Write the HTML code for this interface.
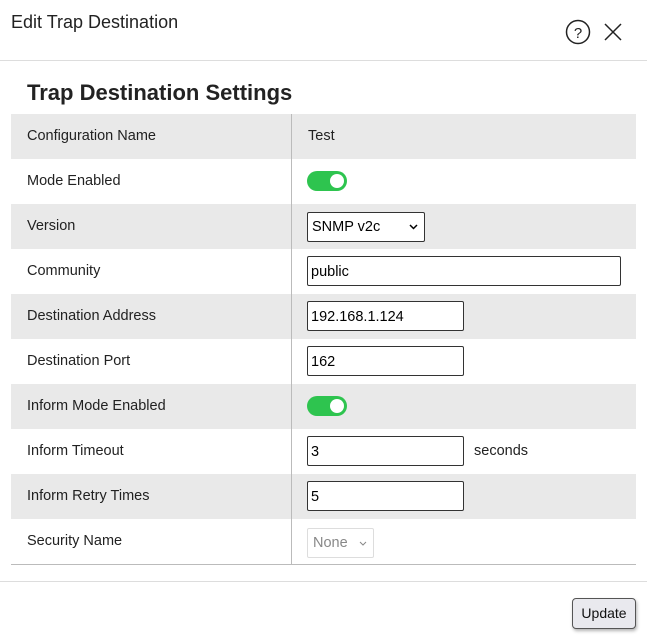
<!DOCTYPE html><html><head><style>
body{margin:0;width:647px;height:641px;background:#fff;font-family:"Liberation Sans",sans-serif;color:#222;position:relative;overflow:hidden}
.a{position:absolute}
.row{position:absolute;left:11px;width:625px;height:45px}
.g{background:#e9e9e9}
.lbl{position:absolute;left:16px;top:14px;font-size:14.5px;color:#222}
.inp{position:absolute;border:1px solid #333;border-radius:2px;background:#fff;box-sizing:border-box;height:30px;font-size:14.5px;padding:6px 3px;color:#000}
.tog{position:absolute;left:296px;top:12px;width:40px;height:20px;border-radius:10px;background:#2ec44f}
.tog:after{content:"";position:absolute;right:3px;top:3px;width:14px;height:14px;border-radius:50%;background:#fff}
</style></head><body>
<div class="a" style="left:11px;top:12px;font-size:18px;color:#222">Edit Trap Destination</div>
<svg class="a" style="left:565px;top:19px" width="28" height="28"><circle cx="13" cy="13" r="11.5" fill="none" stroke="#222" stroke-width="1.5"/><text x="13" y="19" font-size="15" text-anchor="middle" font-family="Liberation Sans" fill="#222">?</text></svg>
<svg class="a" style="left:604px;top:23px" width="18" height="18"><path d="M1 1L17 17M17 1L1 17" stroke="#222" stroke-width="1.5"/></svg>
<div class="a" style="left:0;top:60px;width:647px;height:1px;background:#ddd"></div>
<div class="a" style="left:27px;top:80px;font-size:22px;font-weight:bold;color:#222">Trap Destination Settings</div>
<div class="row g" style="top:114px"><span class="lbl">Configuration Name</span><span class="lbl" style="left:297px">Test</span></div>
<div class="row" style="top:159px"><span class="lbl">Mode Enabled</span><div class="tog"></div></div>
<div class="row g" style="top:204px"><span class="lbl">Version</span><div class="inp" style="left:296px;top:8px;width:118px;padding:6px 4px">SNMP v2c<svg style="position:absolute;right:6px;top:11px" width="9" height="6"><path d="M1 1L4.5 4.5L8 1" stroke="#000" fill="none" stroke-width="1.5"/></svg></div></div>
<div class="row" style="top:249px"><span class="lbl">Community</span><div class="inp" style="left:296px;top:7px;width:314px;padding-top:7px">public</div></div>
<div class="row g" style="top:294px"><span class="lbl">Destination Address</span><div class="inp" style="left:296px;top:7px;width:157px;padding-top:7px">192.168.1.124</div></div>
<div class="row" style="top:339px"><span class="lbl">Destination Port</span><div class="inp" style="left:296px;top:7px;width:157px;padding-top:7px">162</div></div>
<div class="row g" style="top:384px"><span class="lbl">Inform Mode Enabled</span><div class="tog"></div></div>
<div class="row" style="top:429px"><span class="lbl">Inform Timeout</span><div class="inp" style="left:296px;top:7px;width:157px;padding-top:7px">3</div><span class="lbl" style="left:463px;top:14px">seconds</span></div>
<div class="row g" style="top:474px"><span class="lbl">Inform Retry Times</span><div class="inp" style="left:296px;top:7px;width:157px;padding-top:7px">5</div></div>
<div class="row" style="top:519px"><span class="lbl">Security Name</span><div class="inp" style="left:296px;top:9px;width:67px;border-color:#ddd;color:#888;padding:6px 5px">None<svg style="position:absolute;right:6px;top:12px" width="8" height="5"><path d="M1 1L4 4L7 1" stroke="#888" fill="none"/></svg></div></div>
<div class="a" style="left:291px;top:114px;width:1px;height:450px;background:#bbb"></div>
<div class="a" style="left:11px;top:564px;width:625px;height:1px;background:#bbb"></div>
<div class="a" style="left:0;top:581px;width:647px;height:1px;background:#ddd"></div>
<div class="a" style="left:572px;top:598px;width:64px;height:31px;box-sizing:border-box;border:1px solid #555;border-radius:4px;background:#e9e9ee;box-shadow:1px 2px 3px rgba(0,0,0,.3);font-size:14px;text-align:center;line-height:29px;color:#111">Update</div>
</body></html>
